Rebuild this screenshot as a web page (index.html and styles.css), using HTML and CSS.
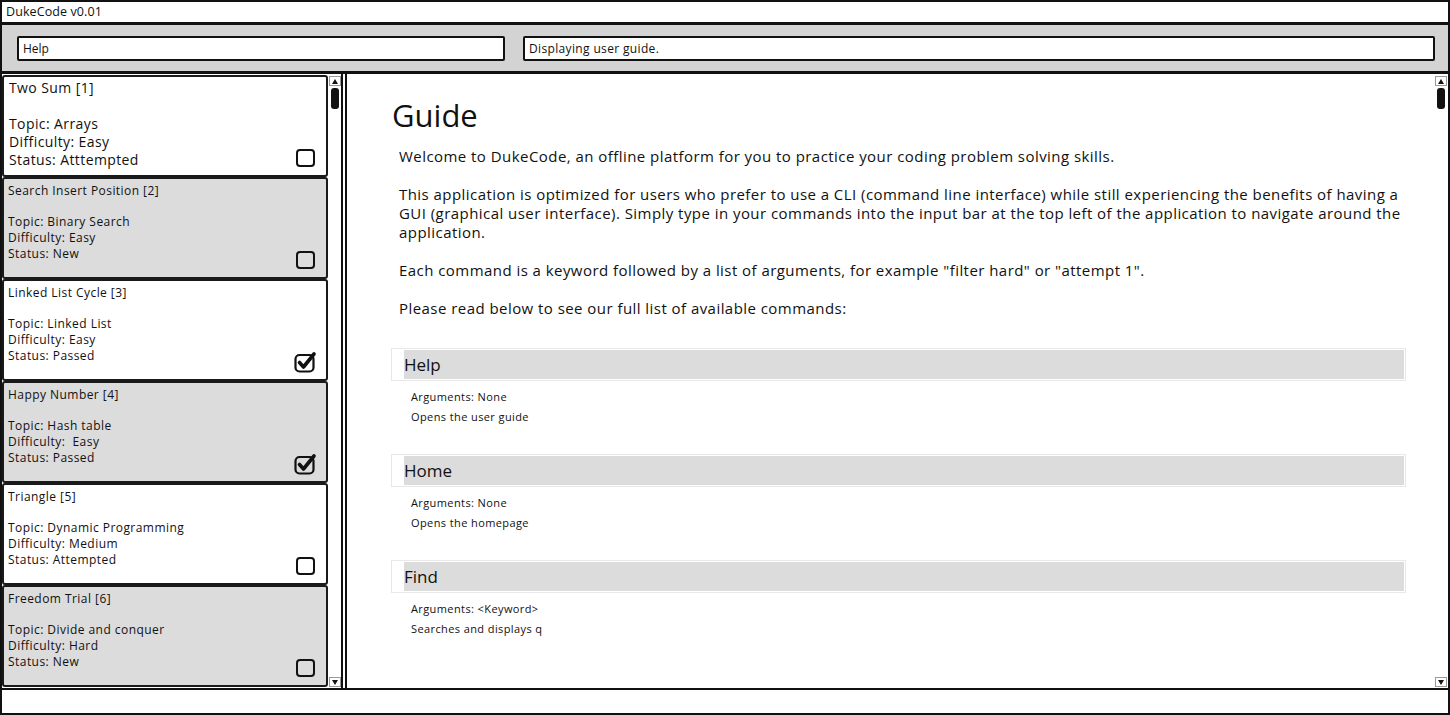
FILE: index.html
```html
<!DOCTYPE html>
<html lang="en">
    <head>
        <meta charset="UTF-8" />
        <meta name="viewport" content="width=device-width, initial-scale=1.0" />
        <link rel="stylesheet" href="styles.css">
        <title>DukeCode</title>
    </head>
    <body>
        <div class="window">
            <header class="titlebar">DukeCode v0.01</header>

            <div class="toolbar">
                <div class="field field-cmd">Help</div>
                <div class="field field-result">Displaying user guide.</div>
            </div>

            <div class="main">
                <!-- problem list -->
                <div class="pane list-pane">
                    <div class="problem-list">
                        <div class="card card-big">
                            <div class="card-text">
                                <p class="card-title">Two Sum [1]</p>
                                <p>Topic: Arrays</p>
                                <p>Difficulty: Easy</p>
                                <p>Status: Atttempted</p>
                            </div>
                            <span class="checkbox"></span>
                        </div>
                        <div class="card card-grey">
                            <div class="card-text">
                                <p class="card-title">Search Insert Position [2]</p>
                                <p>Topic: Binary Search</p>
                                <p>Difficulty: Easy</p>
                                <p>Status: New</p>
                            </div>
                            <span class="checkbox"></span>
                        </div>
                        <div class="card">
                            <div class="card-text">
                                <p class="card-title">Linked List Cycle [3]</p>
                                <p>Topic: Linked List</p>
                                <p>Difficulty: Easy</p>
                                <p>Status: Passed</p>
                            </div>
                            <svg class="checked" width="24" height="22" viewBox="0 0 24 22">
                                <rect x="1.5" y="4" width="18" height="16.5" rx="4" fill="none" stroke="#111" stroke-width="2.2" />
                                <path d="M5.5 11.5 L9.5 16 L20 3" fill="none" stroke="#111" stroke-width="3.6" stroke-linecap="round" stroke-linejoin="round" />
                            </svg>
                        </div>
                        <div class="card card-grey">
                            <div class="card-text">
                                <p class="card-title">Happy Number [4]</p>
                                <p>Topic: Hash table</p>
                                <p>Difficulty:&nbsp; Easy</p>
                                <p>Status: Passed</p>
                            </div>
                            <svg class="checked" width="24" height="22" viewBox="0 0 24 22">
                                <rect x="1.5" y="4" width="18" height="16.5" rx="4" fill="none" stroke="#111" stroke-width="2.2" />
                                <path d="M5.5 11.5 L9.5 16 L20 3" fill="none" stroke="#111" stroke-width="3.6" stroke-linecap="round" stroke-linejoin="round" />
                            </svg>
                        </div>
                        <div class="card">
                            <div class="card-text">
                                <p class="card-title">Triangle [5]</p>
                                <p>Topic: Dynamic Programming</p>
                                <p>Difficulty: Medium</p>
                                <p>Status: Attempted</p>
                            </div>
                            <span class="checkbox"></span>
                        </div>
                        <div class="card card-grey">
                            <div class="card-text">
                                <p class="card-title">Freedom Trial [6]</p>
                                <p>Topic: Divide and conquer</p>
                                <p>Difficulty: Hard</p>
                                <p>Status: New</p>
                            </div>
                            <span class="checkbox"></span>
                        </div>
                    </div>
                    <div class="scrollbar">
                        <span class="scroll-btn up"></span>
                        <span class="scroll-thumb"></span>
                        <span class="scroll-track"></span>
                        <span class="scroll-btn down"></span>
                    </div>
                </div>

                <!-- user guide -->
                <div class="pane guide-pane">
                    <div class="guide">
                        <h1>Guide</h1>
                        <p class="intro">Welcome to DukeCode, an offline platform for you to practice your coding problem solving skills.</p>
                        <p class="intro">This application is optimized for users who prefer to use a CLI (command line interface) while still experiencing the benefits of having a GUI (graphical user interface). Simply type in your commands into the input bar at the top left of the application to navigate around the application.</p>
                        <p class="intro">Each command is a keyword followed by a list of arguments, for example "filter hard" or "attempt 1".</p>
                        <p class="intro">Please read below to see our full list of available commands:</p>

                        <div class="command">
                            <h2>Help</h2>
                            <p>Arguments: None</p>
                            <p>Opens the user guide</p>
                        </div>
                        <div class="command">
                            <h2>Home</h2>
                            <p>Arguments: None</p>
                            <p>Opens the homepage</p>
                        </div>
                        <div class="command">
                            <h2>Find</h2>
                            <p>Arguments: &lt;Keyword&gt;</p>
                            <p>Searches and displays q</p>
                        </div>
                    </div>
                    <div class="scrollbar scrollbar-wide">
                        <span class="scroll-btn up"></span>
                        <span class="scroll-thumb"></span>
                        <span class="scroll-track"></span>
                        <span class="scroll-btn down"></span>
                    </div>
                </div>
            </div>

            <footer class="statusbar"></footer>
        </div>
    </body>
</html>
```

FILE: styles.css
```css
* {
    padding: 0;
    margin: 0;
    box-sizing: border-box;
}

body {
    background: #fff;
    font-family: "Open Sans", "Liberation Sans", sans-serif;
    color: #111;
}

.window {
    width: 1450px;
    height: 715px;
    border: 2px solid #111;
    display: flex;
    flex-direction: column;
    overflow: hidden;
}

.titlebar {
    height: 23px;
    border-bottom: 3px solid #111;
    padding-left: 4px;
    font-size: 12.5px;
    line-height: 20px;
    letter-spacing: 0.1px;
}

.toolbar {
    height: 49px;
    background: #d3d3d3;
    border-bottom: 3px solid #111;
    display: flex;
    gap: 18px;
    padding: 11px 13px 0 15px;
}

.field {
    height: 25px;
    background: #fff;
    border: 2px solid #111;
    border-radius: 2px;
    font-size: 12px;
    line-height: 21px;
    padding-left: 4px;
}

.field-cmd {
    width: 488px;
}

.field-result {
    flex: 1;
    letter-spacing: 0.35px;
}

.main {
    flex: 1;
    display: flex;
    gap: 2px;
    min-height: 0;
}

.pane {
    display: flex;
    border-right: 2px solid #111;
}

.list-pane {
    width: 341px;
}

.guide-pane {
    flex: 1;
    border-left: 2px solid #111;
    border-right: none;
}

/* problem cards */
.problem-list {
    width: 326px;
    display: flex;
    flex-direction: column;
    padding-top: 1px;
}

.card {
    height: 102px;
    display: flex;
    justify-content: space-between;
    align-items: flex-end;
    border: 2px solid #1a1a1a;
    border-radius: 3px;
    padding: 4px 11px 8px 4px;
    font-size: 12px;
    line-height: 16px;
    letter-spacing: 0.45px;
    background: #fff;
    flex-shrink: 0;
}

.card-grey {
    background: #dcdcdc;
}

.card-text {
    align-self: flex-start;
}

.card-title {
    margin-bottom: 15px;
}

.card-big {
    padding: 2px 11px 8px 5px;
    font-size: 14px;
    line-height: 18px;
    letter-spacing: 0.4px;
}

.card-big .card-title {
    margin-bottom: 18px;
}

.checkbox {
    width: 19px;
    height: 18px;
    border: 2px solid #111;
    border-radius: 4px;
}

.checked {
    margin-right: -3px;
    margin-bottom: -2px;
}

/* scrollbars */
.scrollbar {
    width: 13px;
    display: flex;
    flex-direction: column;
    align-items: center;
    padding: 2px 0 1px;
    background: #fff;
}

.scrollbar-wide {
    width: 14px;
}

.scroll-btn {
    width: 12px;
    height: 10px;
    border: 1px solid #999;
    position: relative;
}

.scroll-btn::after {
    content: "";
    position: absolute;
    left: 2px;
    border-left: 3.5px solid transparent;
    border-right: 3.5px solid transparent;
}

.scroll-btn.up::after {
    top: 2px;
    border-bottom: 5px solid #111;
}

.scroll-btn.down::after {
    top: 2px;
    border-top: 5px solid #111;
}

.scroll-thumb {
    width: 8px;
    height: 21px;
    margin-top: 2px;
    background: #111;
    border-radius: 3px;
}

.scroll-track {
    flex: 1;
}

/* guide */
.guide {
    flex: 1;
    padding: 22px 28px 0 44px;
}

.guide h1 {
    font-size: 31px;
    font-weight: 400;
    line-height: 38px;
    margin-left: 1px;
    margin-bottom: 13px;
}

.intro {
    margin-left: 8px;
    margin-right: 3px;
    font-size: 15px;
    line-height: 19px;
    letter-spacing: 0.45px;
    margin-bottom: 19px;
}

.command {
    margin-bottom: 27px;
}

.intro + .command {
    margin-top: 30px;
}

.command h2 {
    height: 33px;
    border: 1px solid #e8e8e8;
    padding: 1px;
    font-size: 17px;
    font-weight: 400;
    line-height: 29px;
    background: #dcdcdc content-box;
    padding-left: 12px;
    margin-bottom: 6px;
}

.command p {
    margin-left: 20px;
    font-size: 11px;
    line-height: 20px;
    letter-spacing: 0.4px;
}

.statusbar {
    height: 25px;
    border-top: 2px solid #111;
    background: #fff;
}
```
